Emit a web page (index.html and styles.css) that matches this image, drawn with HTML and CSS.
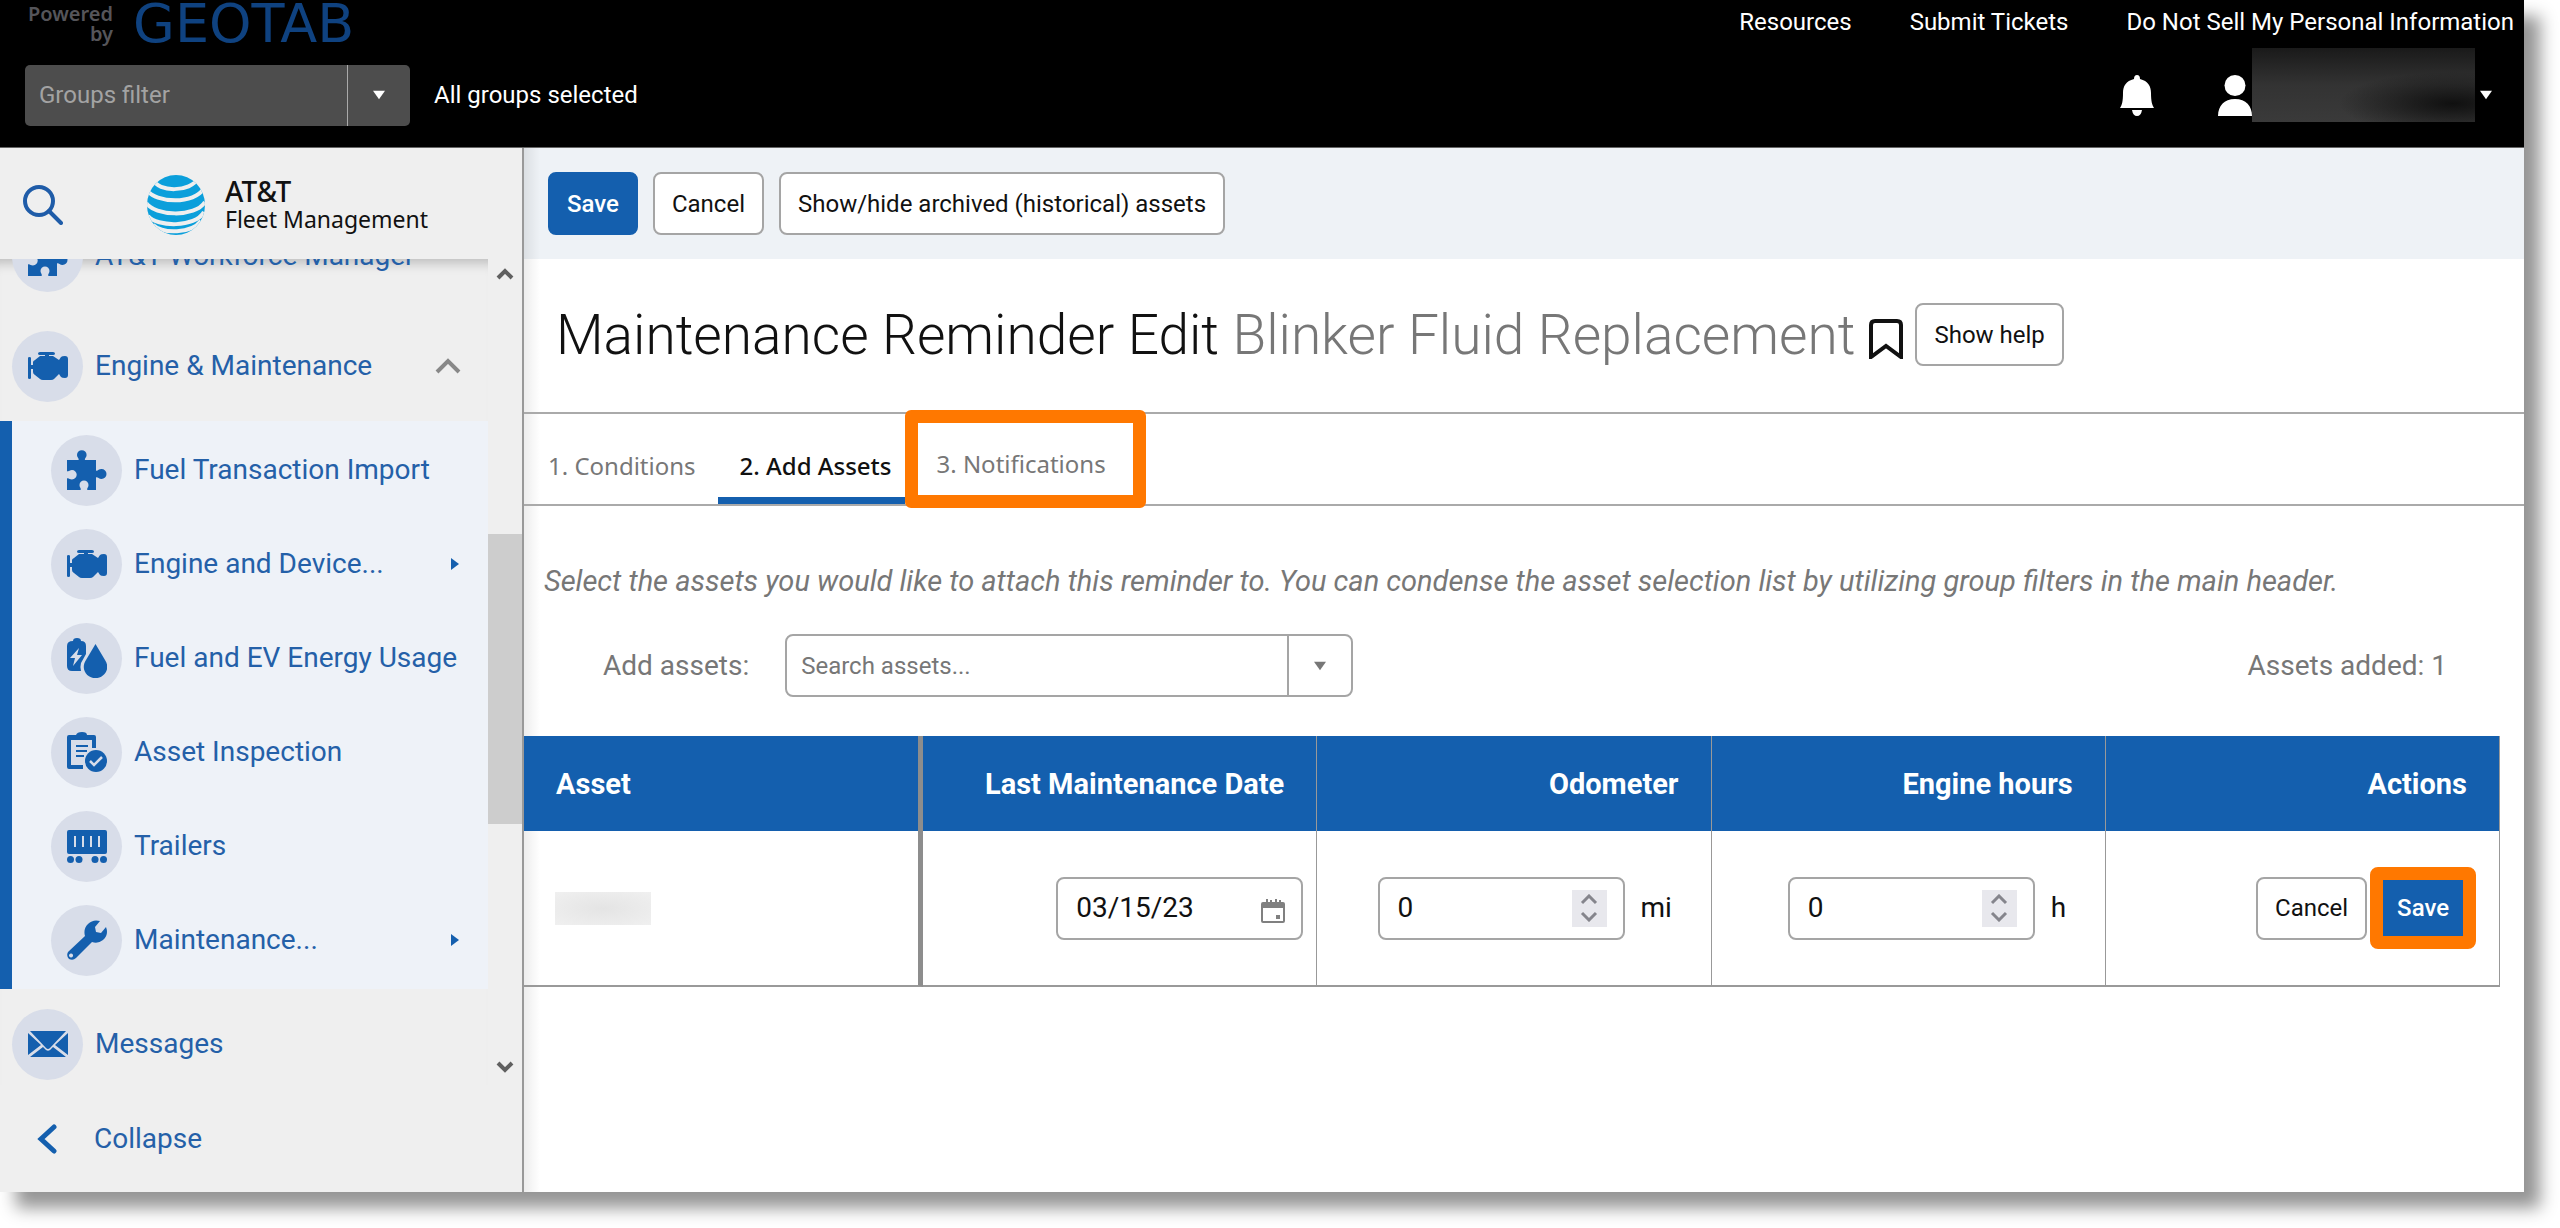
FILE: index.html
```html
<!DOCTYPE html>
<html lang="en">
<head>
<meta charset="utf-8">
<title>Maintenance Reminder Edit</title>
<link rel="stylesheet" href="styles.css">
</head>
<body>
<svg class="sprite" aria-hidden="true">
  <symbol id="puzzle" viewBox="0 0 40 40"><path d="M0 10h11.500c1-1.500-1.500-2.500-1.500-5a4.800 4.800 0 0 1 9.600 0c0 2.500-2.500 3.500-1.500 5H29v10.500c1.500 1 2.500-1.500 5.500-1.500a5 5 0 0 1 0 10c-3 0-4-2.500-5.500-1.500V40h-8.500c-1.200-1.500 1-2.500 1-5a4.500 4.500 0 0 0-9 0c0 2.500 2.200 3.500 1 5H0V28.500c1.500-1 2.500 1 5 1a4.700 4.700 0 0 0 0-9.400c-2.500 0-3.500 2-5 1z"/></symbol>
  <symbol id="engine" viewBox="0 0 40 40"><path d="M0 12q0-1 1.500-1T3 12v7h2v-3q0-1 2-2l5-4h5V9h-5q-2 0-2-1.500T12 6h13q2 0 2 1.500T25 9h-4v1h4l6 4 2-3q1-1 4-1 3 0 3 3v16q0 3-3 3-3 0-4-1l-2-3-5 5q-1 1-3 1H15q-2 0-3-1l-5-4q-2-1-2-3v-3H3v9q0 1-1.500 1T0 32z"/></symbol>
  <symbol id="energy" viewBox="0 0 40 40"><path fill-rule="evenodd" d="M6 3q0-3 4-3t4 3q5 0 5 5v8l-5 9q-1 3 0 8H5q-5 0-5-5V8q0-5 6-5zm6 7L3 20h5l-2 8 9-11h-5z"/><path d="M28.500 6 38 22c6 9-1 18-9.500 18S13 31 19 22z"/></symbol>
  <symbol id="inspect" viewBox="0 0 40 40"><path fill-rule="evenodd" d="M2 3h7q1-3 6-3t5 3h7q2 0 2 2v11h-4V8H4v25h12v4H2q-2 0-2-2V5q0-2 2-2zm7 10h12v2H9zm0 5h11v2H9zm0 5h8v2H9z"/><path d="M9 13h12v2H9zM9 18h11v2H9zM9 23h8v2H9z"/><circle cx="29" cy="29" r="11"/><path d="m23 29 4 4 8-8" fill="none" stroke="#d8dde9" stroke-width="2.500"/></symbol>
  <symbol id="trailer" viewBox="0 0 40 40"><path fill-rule="evenodd" d="M2 4h36q2 0 2 2v20q0 2-2 2H2q-2 0-2-2V6q0-2 2-2zm5 6v11h2V10zm8 0v11h2V10zm8 0v11h2V10zm8 0v11h2V10z"/><circle cx="3.500" cy="33.500" r="3.500"/><circle cx="12" cy="33.500" r="3.500"/><circle cx="28" cy="33.500" r="3.500"/><circle cx="36.500" cy="33.500" r="3.500"/></symbol>
  <symbol id="wrench" viewBox="0 0 40 40"><path fill-rule="evenodd" d="M33 1l-5 6 1 5 5 1 5-6q3 8-3 13-5 4-11 2L9 38q-3 3-7 1-3-3-1-7l17-16q-2-7 3-12 5-5 12-3zM4 33.500a2 2 0 1 0 .1 0z"/></symbol>
  <symbol id="mail" viewBox="0 0 40 40"><path d="M2 7h36L22 24q-2 2-4 0zM0 9l13 12L0 31zM40 9v22L27 21zM15 23l3 3q2 1.500 4 0l3-3 13 10H2z"/></symbol>
</svg>
<div class="app">
  <header class="top">
    <div class="brand"><span class="powered">Powered<br>by</span><span class="geotab">GEOTAB</span></div>
    <nav class="links"><a href="#">Resources</a><a href="#">Submit Tickets</a><a href="#">Do Not Sell My Personal Information</a></nav>
    <div class="groups">
      <div class="filter"><input type="text" placeholder="Groups filter" aria-label="Groups filter"><button type="button" aria-label="Open groups"><svg viewBox="0 0 14 10"><path d="M0 0h14L7 10z"/></svg></button></div>
      <span>All groups selected</span>
    </div>
    <div class="user">
      <button type="button" class="bell" aria-label="Notifications"><svg viewBox="0 0 34 41"><path d="M14 4q0-4 3-4t3 4c8 2 11 7 11 14 0 8 1 12 3 15H0c2-3 3-7 3-15C3 11 6 6 14 4zM12 35h10q-1 6-5 6t-5-6z"/></svg></button>
      <button type="button" class="account" aria-label="Account"><svg class="person" viewBox="0 0 34 41"><circle cx="17" cy="10.500" r="10.500"/><path d="M0 41c0-10 6-17 17-17s17 7 17 17z"/></svg><span class="hidden-name"></span><svg class="caret" viewBox="0 0 14 10"><path d="M0 0h14L7 10z"/></svg></button>
    </div>
  </header>
  <aside class="side">
    <div class="side-head">
      <button type="button" class="search" aria-label="Search"><svg viewBox="0 0 40 40"><circle cx="16" cy="16" r="14"/><path d="m26 26 12 12"/></svg></button>
      <svg class="globe" viewBox="0 0 58 60"><clipPath id="ball"><ellipse cx="29" cy="30" rx="29" ry="30"/></clipPath><g clip-path="url(#ball)"><path fill="#0b9fdb" d="M0 0h58v60H0z"/><path fill="none" stroke="#efefef" stroke-width="4" d="M7 5C10 17 44 18 51 3M0 15C8 28 48 30 57 13M-1 28C8 41 48 43 58 27M1 41C10 52 48 53 57 37M6 50C16 59 44 59 54 46"/></g></svg>
      <div class="product"><strong>AT&amp;T</strong><span>Fleet Management</span></div>
    </div>
    <div class="side-body">
      <nav class="menu">
        <a class="item first" href="#"><i class="disc"><svg><use href="#puzzle"/></svg></i>AT&amp;T Workforce Manager</a>
        <a class="item" href="#"><i class="disc"><svg><use href="#engine"/></svg></i>Engine &amp; Maintenance<svg class="chev" viewBox="0 0 26 16"><path d="M2 14 13 3l11 11"/></svg></a>
        <div class="sub">
          <a class="item" href="#"><i class="disc"><svg><use href="#puzzle"/></svg></i>Fuel Transaction Import</a>
          <a class="item" href="#"><i class="disc"><svg><use href="#engine"/></svg></i>Engine and Device...<svg class="more" viewBox="0 0 8 12"><path d="M0 0l8 6-8 6z"/></svg></a>
          <a class="item" href="#"><i class="disc"><svg><use href="#energy"/></svg></i>Fuel and EV Energy Usage</a>
          <a class="item" href="#"><i class="disc"><svg><use href="#inspect"/></svg></i>Asset Inspection</a>
          <a class="item" href="#"><i class="disc"><svg><use href="#trailer"/></svg></i>Trailers</a>
          <a class="item" href="#"><i class="disc"><svg><use href="#wrench"/></svg></i>Maintenance...<svg class="more" viewBox="0 0 8 12"><path d="M0 0l8 6-8 6z"/></svg></a>
        </div>
        <a class="item" href="#"><i class="disc"><svg><use href="#mail"/></svg></i>Messages</a>
      </nav>
      <div class="track">
        <svg viewBox="0 0 18 14"><path d="M2 11l7-7 7 7"/></svg>
        <div class="rail"><div class="thumb"></div></div>
        <svg viewBox="0 0 18 14"><path d="M2 3l7 7 7-7"/></svg>
      </div>
    </div>
    <button type="button" class="collapse"><svg viewBox="0 0 20 30"><path d="M17 3 4 15l13 12"/></svg>Collapse</button>
  </aside>
  <main class="main">
    <div class="toolbar"><button type="button" class="btn primary">Save</button><button type="button" class="btn">Cancel</button><button type="button" class="btn">Show/hide archived (historical) assets</button></div>
    <div class="title"><h1>Maintenance Reminder Edit <span>Blinker Fluid Replacement</span></h1><svg class="bookmark" viewBox="0 0 34 40"><path d="M2 38V6q0-4 4-4h22q4 0 4 4v32L17 27z"/></svg><button type="button" class="btn">Show help</button></div>
    <nav class="tabs"><a href="#">1. Conditions</a><a href="#" class="on">2. Add Assets</a><a href="#" class="mark">3. Notifications</a></nav>
    <p class="hint">Select the assets you would like to attach this reminder to. You can condense the asset selection list by utilizing group filters in the main header.</p>
    <div class="add">
      <label for="assets">Add assets:</label>
      <div class="combo"><input id="assets" type="text" placeholder="Search assets..."><button type="button" aria-label="Open assets"><svg viewBox="0 0 14 10"><path d="M0 0h14L7 10z"/></svg></button></div>
      <span class="count">Assets added: 1</span>
    </div>
    <table>
      <thead><tr><th>Asset</th><th>Last Maintenance Date</th><th>Odometer</th><th>Engine hours</th><th>Actions</th></tr></thead>
      <tbody><tr>
        <td><span class="hidden-asset"></span></td>
        <td><div class="cell"><div class="field"><input type="text" value="03/15/23" aria-label="Last maintenance date"><svg class="cal" viewBox="0 0 24 24"><path fill-rule="evenodd" d="M2 3h3V0h2v3h2V1h2v2h3V0h2v3h2V1h2v2h2q2 0 2 2v17q0 2-2 2H2q-2 0-2-2V5q0-2 2-2zm0 6v13h20V9zm13 7h4v4h-4z"/></svg></div></div></td>
        <td><div class="cell"><div class="field"><input type="text" value="0" id="odo" aria-label="Odometer"><button type="button" class="spin" aria-label="Step odometer"><svg viewBox="0 0 18 28"><path d="M2 9l7-7 7 7M2 19l7 7 7-7"/></svg></button></div><label for="odo" class="mi">mi</label></div></td>
        <td><div class="cell"><div class="field"><input type="text" value="0" id="hrs" aria-label="Engine hours"><button type="button" class="spin" aria-label="Step engine hours"><svg viewBox="0 0 18 28"><path d="M2 9l7-7 7 7M2 19l7 7 7-7"/></svg></button></div><label for="hrs" class="h">h</label></div></td>
        <td><div class="cell act"><button type="button" class="btn">Cancel</button><button type="button" class="btn primary ring">Save</button></div></td>
      </tr></tbody>
    </table>
  </main>
</div>
</body>
</html>
```
FILE: styles.css
```css
* { box-sizing: border-box; }
body { margin: 0; min-height: 100vh; background: #fff; font: 24px/32px Roboto, "Liberation Sans", sans-serif; color: #111; }
a { color: inherit; text-decoration: none; }
button, input { font: inherit; color: inherit; margin: 0; padding: 0; border: 0; background: none; }
svg { display: block; flex: none; fill: currentColor; }
.sprite { position: absolute; width: 0; height: 0; }
.app { display: grid; grid-template: 148px minmax(0, 1fr) / 524px minmax(0, 1fr); height: calc(100vh - 36px); margin-right: 36px; box-shadow: 16px 16px 16px rgba(0, 0, 0, .42); background: #fff; }

.top { grid-column: 1 / -1; display: grid; grid-template: 48px 99px / auto auto; justify-content: space-between; background: #000; color: #fff; border-bottom: 1px solid #666; }
.brand { display: flex; align-items: center; gap: 20px; padding-left: 28px; }
.powered { font: 600 20px/20px "Noto Sans", sans-serif; color: #55555a; text-align: right; }
.geotab { font: 54px/48px "DejaVu Sans", sans-serif; color: #0f4280; }
.links { display: flex; gap: 58px; padding: 6px 10px 0 0; justify-content: flex-end; }
.groups { display: flex; align-items: center; gap: 24px; padding: 0 0 5px 25px; }
.filter { display: flex; width: 385px; height: 61px; background: #4d4d4d; border-radius: 5px; }
.filter input { flex: 1; min-width: 0; padding-left: 14px; }
.filter input::placeholder { color: #a3a3a3; opacity: 1; }
.filter button { width: 63px; border-left: 1px solid #aaa; display: grid; place-items: center; }
.filter svg, .caret { width: 12px; height: 10px; }
.user { display: flex; align-items: center; gap: 64px; padding: 0 32px 5px 0; justify-content: flex-end; }
.bell svg, .person { width: 34px; height: 41px; }
.account { display: flex; align-items: center; height: 94px; }
.hidden-name { width: 223px; height: 74px; margin: 0 5px 20px 0; background: radial-gradient(ellipse at 90% 75%, #101010, transparent 40%), linear-gradient(#1a1a1a, #333 50%, #3a3a3a); }

.side { display: flex; flex-direction: column; min-height: 0; background: #efefef; border-right: 2px solid #999; color: #2460a8; }
.side-head { display: flex; align-items: center; height: 111px; padding: 2px 23px 0; }
.search { color: #1f5ca8; }
.search svg { width: 40px; height: 40px; fill: none; stroke: currentColor; stroke-width: 4; stroke-linecap: round; }
.globe { width: 58px; height: 60px; margin-left: 84px; }
.product { display: grid; margin-left: 20px; color: #111; font: 23px/28px "Noto Sans", sans-serif; }
.product strong { font-size: 28px; font-weight: 500; }
.side-body { flex: 1; min-height: 0; display: flex; overflow: hidden; }
.menu { flex: 1; overflow: hidden; font-size: 28px; box-shadow: inset 0 14px 12px -10px rgba(0, 0, 0, .22); }
.item { display: flex; align-items: center; height: 110px; padding-left: 12px; white-space: nowrap; }
.first { margin-top: -58px; }
.disc { display: grid; place-items: center; width: 71px; height: 71px; margin-right: 12px; border-radius: 50%; background: #d8dde9; color: #145fae; }
.disc svg { width: 40px; height: 40px; }
.chev { width: 26px; height: 16px; margin: 0 27px 0 auto; fill: none; stroke: #888; stroke-width: 4; }
.sub { padding: 2px 0; background: #eef2f8; border-left: 12px solid #145fae; }
.sub .item { height: 94px; padding-left: 39px; }
.more { width: 8px; height: 12px; margin: 0 29px 0 auto; color: #145fae; }
.track { display: flex; flex-direction: column; align-items: center; width: 34px; padding: 8px 0 11px; }
.track svg { width: 18px; height: 14px; fill: none; stroke: #606060; stroke-width: 4; }
.rail { flex: 1; width: 34px; padding-top: 253px; }
.thumb { height: 290px; background: #cdcdcd; }
.collapse { display: flex; align-items: center; gap: 37px; height: 107px; padding-left: 37px; font-size: 28px; }
.collapse svg { width: 20px; height: 30px; fill: none; stroke: #145fae; stroke-width: 5; stroke-linecap: round; }

.main { min-width: 0; background: linear-gradient(90deg, rgba(0, 0, 0, .07), transparent 16px); }
.btn { height: 63px; padding: 0 17px; border: 2px solid #a5a5a5; border-radius: 8px; background: #fff; white-space: nowrap; }
.primary { border-color: #145fae; background: #145fae; color: #fff; font-weight: 500; }
.toolbar { display: flex; align-items: center; gap: 15px; height: 111px; padding-left: 24px; background: linear-gradient(90deg, rgba(0, 0, 0, .08), transparent 16px), #eef2f6; }
.title { display: flex; align-items: center; height: 155px; padding: 0 0 2px 32px; border-bottom: 2px solid #aaa; }
h1 { margin: 0; font: 300 55px/64px Roboto, sans-serif; white-space: nowrap; }
h1 span { color: #777; }
.bookmark { width: 34px; height: 40px; margin: 8px 12px 0 14px; fill: none; stroke: #111; stroke-width: 4; }
.tabs { display: flex; height: 92px; border-bottom: 2px solid #aaa; font-family: "Noto Sans", sans-serif; color: #777; }
.tabs a { display: flex; align-items: center; padding: 14px 22px 0 24px; }
.tabs .on { color: #111; font-weight: 500; border-bottom: 7px solid #145fae; padding: 21px 14px 0 22px; }
.tabs .mark { width: 241px; height: 98px; margin-top: -4px; padding: 10px 18px 0; border: 13px solid #ff7800; border-radius: 6px; }
.hint { margin: 59px 20px 0; font-size: 29px; font-style: italic; color: #777; }
.add { display: flex; align-items: center; margin: 37px 77px 39px 79px; font-size: 28px; color: #777; }
.combo { display: flex; width: 568px; height: 63px; margin-left: 36px; border: 2px solid #a5a5a5; border-radius: 8px; background: #fff; font-size: 24px; }
.combo input { flex: 1; min-width: 0; padding-left: 14px; }
.combo input::placeholder { color: #777; opacity: 1; }
.combo button { width: 64px; border-left: 2px solid #a5a5a5; display: grid; place-items: center; }
.combo svg { width: 12px; height: 10px; }
.count { margin-left: auto; }

table { width: calc(100% - 24px); table-layout: fixed; border-collapse: separate; border-spacing: 0; }
th { height: 95px; padding: 0 32px; background: #145fae; color: #fff; font-size: 29px; font-weight: 700; text-align: right; border-right: 1px solid #999; }
td { height: 156px; padding: 0 13px 0 31px; border-right: 1px solid #999; border-bottom: 2px solid #999; font-size: 28px; }
th:first-child { width: 399px; text-align: left; }
th:first-child, td:first-child { border-right: 5px solid #8d8d8d; }
.hidden-asset { display: block; width: 96px; height: 33px; background: radial-gradient(#e4e4e4, #f0f0f0); }
.cell { display: flex; align-items: center; justify-content: flex-end; }
.field { display: flex; align-items: center; width: 247px; height: 63px; padding: 0 16px 0 18px; border: 2px solid #a5a5a5; border-radius: 8px; background: #fff; }
.field input { flex: 1; min-width: 0; }
.cal { width: 24px; height: 24px; margin-top: 6px; color: #808080; }
.spin { display: grid; place-items: center; width: 35px; height: 37px; background: #e8e8ed; color: #85858c; }
.spin svg { width: 18px; height: 28px; fill: none; stroke: currentColor; stroke-width: 3; }
.cell label { padding-left: 16px; }
.mi { width: 73px; }
.h { width: 57px; }
.act { padding-right: 10px; gap: 3px; }
.act .btn { font-size: 24px; }
.act .ring { height: 82px; padding: 0 14px; border: 13px solid #ff7800; }
```
